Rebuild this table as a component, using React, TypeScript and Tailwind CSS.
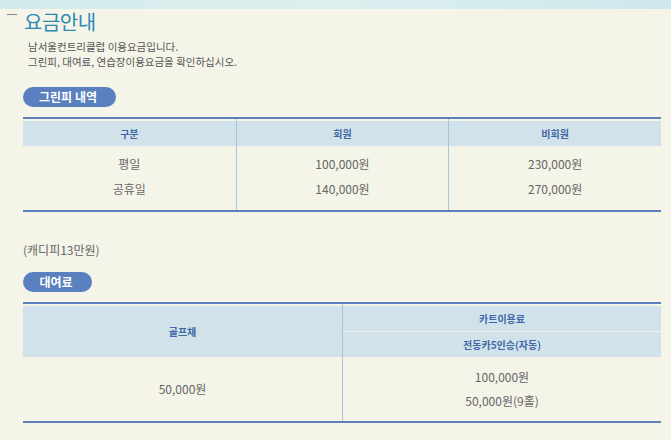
import React from 'react';

const font = { fontFamily: '"Noto Sans CJK KR", "Noto Sans", sans-serif' };

const Pill: React.FC<{ label: string; width: string }> = ({ label, width }) => (
  <div className={`${width} h-[20px] rounded-full bg-[#5a80c0] text-white text-[12px] font-bold leading-[20px] text-center pr-[3px]`}>
    {label}
  </div>
);

const greenFees = [
  { day: '평일', member: '100,000원', guest: '230,000원' },
  { day: '공휴일', member: '140,000원', guest: '270,000원' },
];

export default function App() {
  return (
    <div className="w-full h-[440px] bg-[#f4f4e9] overflow-hidden" style={font}>
      <div className="h-[9px] bg-gradient-to-r from-[#d4eaea] via-[#dcefef] to-[#cfe7ec]" />

      {/* title */}
      <div className="mt-[1px] h-[24px] flex items-start pl-[7px]">
        <div className="mt-[4px] w-[10px] h-px bg-[#8a8a8a]" />
        <div className="ml-[7px] text-[20px] leading-[24px] text-[#2b8bb2] tracking-[-0.5px]">요금안내</div>
      </div>

      <div className="mt-[5px] pl-[28px] text-[10.5px] leading-[15px] text-[#555]">
        <div>남서울컨트리클럽 이용요금입니다.</div>
        <div>그린피, 대여료, 연습장이용요금을 확인하십시오.</div>
      </div>

      <div className="px-[23px] w-[684px]">
        <div className="mt-[18px]">
          <Pill label="그린피 내역" width="w-[93px]" />
        </div>

        {/* green fee table */}
        <div className="mt-[10px] border-t-2 border-b-2 border-[#5a80c0] grid grid-cols-3">
          {[
            { head: '구분', key: 'day' as const },
            { head: '회원', key: 'member' as const },
            { head: '비회원', key: 'guest' as const },
          ].map((col, i) => (
            <div key={col.head} className={i > 0 ? 'border-l border-[#a9c5d9]' : ''}>
              <div className="h-[2px]" />
              <div className="h-[25px] bg-[#d2e2ea] flex items-center justify-center text-[10px] font-bold text-[#4067a6]">
                {col.head}
              </div>
              <div className="pt-[5px] pb-[9px] text-[12px] text-[#666]">
                {greenFees.map((r) => (
                  <div key={r.day} className="h-[25px] leading-[25px] text-center">{r[col.key]}</div>
                ))}
              </div>
            </div>
          ))}
        </div>

        <div className="mt-[30px] text-[12px] leading-[16px] text-[#666]">(캐디피13만원)</div>

        <div className="mt-[14px]">
          <Pill label="대여료" width="w-[69px]" />
        </div>

        {/* rental table */}
        <div className="mt-[10px] border-t-2 border-b-2 border-[#5a80c0] grid grid-cols-2">
          <div>
            <div className="h-[2px]" />
            <div className="h-[51px] bg-[#d2e2ea] flex items-center justify-center text-[10px] font-bold text-[#4067a6]">
              골프채
            </div>
            <div className="h-[64px] flex items-center justify-center text-[12px] text-[#666]">50,000원</div>
          </div>
          <div className="border-l border-[#a9c5d9]">
            <div className="h-[2px]" />
            <div className="h-[25px] bg-[#d2e2ea] flex items-center justify-center text-[10px] font-bold text-[#4067a6]">
              카트이용료
            </div>
            <div className="h-px bg-[#eef2ec]" />
            <div className="h-[25px] bg-[#d2e2ea] flex items-center justify-center text-[10px] font-bold text-[#4067a6]">
              전동카5인승(자동)
            </div>
            <div className="h-[64px] flex flex-col justify-center text-[12px] text-[#666] text-center">
              <div className="h-[24px] leading-[24px]">100,000원</div>
              <div className="h-[24px] leading-[24px]">50,000원(9홀)</div>
            </div>
          </div>
        </div>
      </div>
    </div>
  );
}
